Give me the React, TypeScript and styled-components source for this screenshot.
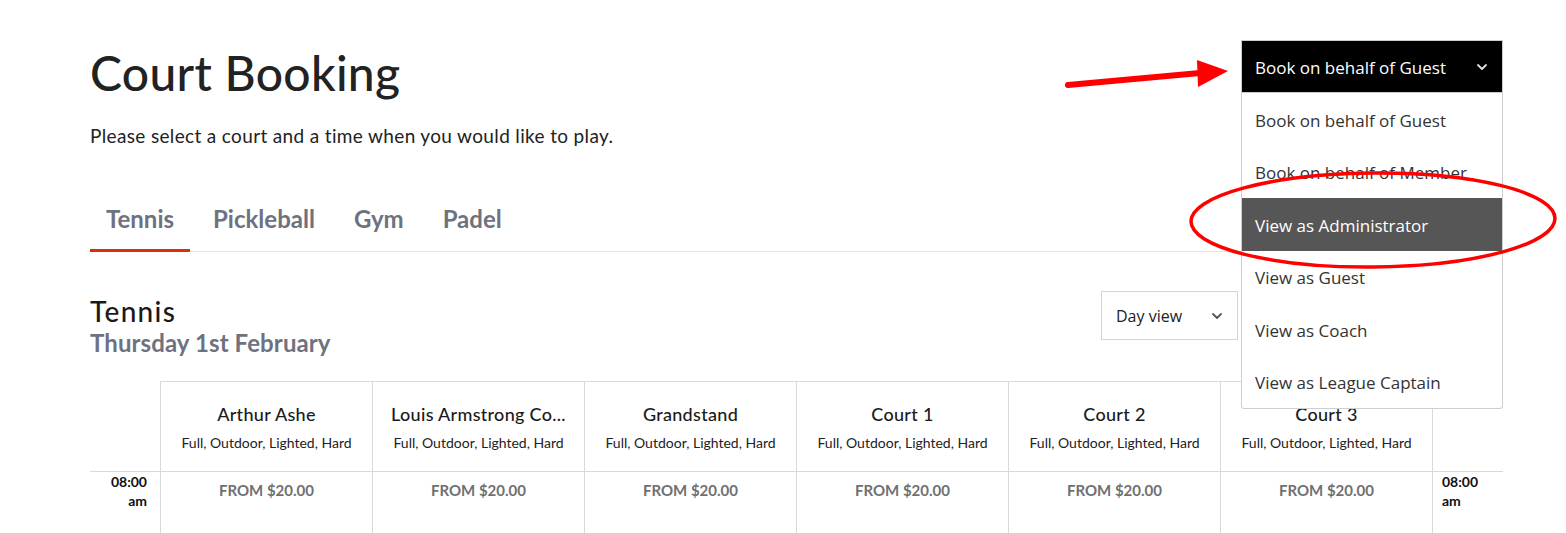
import React from "react";
import styled, { createGlobalStyle } from "styled-components";

const Global = createGlobalStyle`
  html, body { margin: 0; padding: 0; background: #fff; }
  body { font-family: Lato, "Open Sans", sans-serif; color: #222; }
  * { box-sizing: border-box; }
`;

const Page = styled.div`
  position: relative;
  width: 1566px;
  height: 533px;
  overflow: hidden;
  padding: 40px 63px 0 90px;
`;

const Header = styled.div`
  display: flex;
  justify-content: space-between;
  align-items: flex-start;
`;

const Title = styled.h1`
  margin: 6px 0 0 0;
  font-size: 48px;
  line-height: 54px;
  font-weight: 500;
  color: #222;
  letter-spacing: 0.3px;
`;

const Subtitle = styled.p`
  margin: 23px 0 0 0;
  font-size: 19px;
  line-height: 26px;
  color: #222;
  letter-spacing: 0.35px;
`;

const Tabs = styled.div`
  margin-top: 47px;
  display: flex;
  gap: 7px;
  border-bottom: 1px solid #e6e6e6;
`;

const Tab = styled.div<{ $active?: boolean }>`
  padding: 8px 16px 15px;
  font-size: 24px;
  line-height: 30px;
  font-weight: 700;
  color: #6e7280;
  border-bottom: 3px solid ${(p) => (p.$active ? "#e12b10" : "transparent")};
  margin-bottom: -1px;
`;

const SectionHead = styled.div`
  margin-top: 39px;
  display: flex;
  justify-content: space-between;
  align-items: flex-start;
`;

const SectionTitle = styled.div`
  font-size: 28px;
  line-height: 32px;
  font-weight: 500;
  color: #1a1a1a;
  letter-spacing: 1.3px;
  margin-top: 4px;
`;

const SectionDate = styled.div`
  font-size: 24px;
  line-height: 32px;
  font-weight: 700;
  color: #6e7280;
  letter-spacing: 0.1px;
`;

const Select = styled.div`
  display: flex;
  align-items: center;
  justify-content: space-between;
  width: 137px;
  height: 49px;
  margin-right: 265px;
  border: 1px solid #d4d4d4;
  padding: 0 14px 0 14px;
  font-family: "Open Sans", sans-serif;
  font-size: 16px;
  color: #222;
`;

const Table = styled.div`
  margin-top: 22px;
  display: grid;
  grid-template-columns: 70px repeat(6, 212px) 71px;
`;

const CornerCell = styled.div`
  border-bottom: 1px solid #d9d9d9;
`;

const CourtHead = styled.div`
  height: 91px;
  border-top: 1px solid #d9d9d9;
  border-left: 1px solid #d9d9d9;
  border-bottom: 1px solid #d9d9d9;
  display: flex;
  flex-direction: column;
  align-items: center;
  padding-top: 21px;
`;

const CourtName = styled.div`
  font-size: 18px;
  line-height: 23px;
  font-weight: 500;
  color: #1a1a1a;
  letter-spacing: 0.3px;
`;

const CourtMeta = styled.div`
  margin-top: 8px;
  font-size: 14px;
  line-height: 18px;
  color: #222;
`;

const TimeCell = styled.div<{ $right?: boolean }>`
  height: 62px;
  font-size: 14px;
  line-height: 19px;
  font-weight: 700;
  color: #111;
  padding-top: 0;
  text-align: ${(p) => (p.$right ? "left" : "right")};
  padding-left: ${(p) => (p.$right ? "9px" : "0")};
  padding-right: ${(p) => (p.$right ? "0" : "13px")};
  border-left: ${(p) => (p.$right ? "1px solid #d9d9d9" : "none")};
`;

const SlotCell = styled.div`
  height: 62px;
  border-left: 1px solid #d9d9d9;
  text-align: center;
  padding-top: 8px;
  font-size: 15px;
  line-height: 20px;
  font-weight: 700;
  color: #707070;
`;

const RoleWrap = styled.div`
  position: relative;
  width: 262px;
`;

const RoleButton = styled.div`
  height: 53px;
  background: #000;
  border: 1px solid #ccc;
  color: #fff;
  display: flex;
  align-items: center;
  justify-content: space-between;
  padding: 1px 14px 0 13px;
  font-family: "Open Sans", sans-serif;
  font-size: 17px;
`;

const Menu = styled.div`
  position: absolute;
  top: 53px;
  left: 0;
  width: 262px;
  background: #fff;
  border: 1px solid #cfcfcf;
  border-top: none;
  border-radius: 0 0 3px 3px;
  z-index: 5;
`;

const MenuItem = styled.div<{ $hl?: boolean }>`
  height: 52.5px;
  display: flex;
  align-items: center;
  padding: 2px 0 0 13px;
  font-family: "Open Sans", sans-serif;
  font-size: 17px;
  color: ${(p) => (p.$hl ? "#fff" : "#333")};
  background: ${(p) => (p.$hl ? "#565656" : "transparent")};
`;

const Overlay = styled.svg`
  position: absolute;
  top: 0;
  left: 0;
  pointer-events: none;
  z-index: 10;
`;

const Chevron = ({ color }: { color: string }) => (
  <svg width="12" height="8" viewBox="0 0 12 8" fill="none">
    <path d="M2 2l4 4 4-4" stroke={color} strokeWidth="1.8" strokeLinecap="round" strokeLinejoin="round" />
  </svg>
);

const courts = ["Arthur Ashe", "Louis Armstrong Co...", "Grandstand", "Court 1", "Court 2", "Court 3"];
const roles = [
  "Book on behalf of Guest",
  "Book on behalf of Member",
  "View as Administrator",
  "View as Guest",
  "View as Coach",
  "View as League Captain",
];

export default function App() {
  return (
    <>
      <Global />
      <Page>
        <Header>
          <div>
            <Title>Court Booking</Title>
            <Subtitle>Please select a court and a time when you would like to play.</Subtitle>
          </div>
          <RoleWrap>
            <RoleButton>
              <span>Book on behalf of Guest</span>
              <Chevron color="#ddd" />
            </RoleButton>
            <Menu>
              {roles.map((r) => (
                <MenuItem key={r} $hl={r === "View as Administrator"}>
                  {r}
                </MenuItem>
              ))}
            </Menu>
          </RoleWrap>
        </Header>
        <Tabs>
          <Tab $active>Tennis</Tab>
          <Tab>Pickleball</Tab>
          <Tab>Gym</Tab>
          <Tab>Padel</Tab>
        </Tabs>
        <SectionHead>
          <div>
            <SectionTitle>Tennis</SectionTitle>
            <SectionDate>Thursday 1st February</SectionDate>
          </div>
          <Select>
            <span>Day view</span>
            <Chevron color="#555" />
          </Select>
        </SectionHead>
        <Table>
          <CornerCell />
          {courts.map((c) => (
            <CourtHead key={c}>
              <CourtName>{c}</CourtName>
              <CourtMeta>Full, Outdoor, Lighted, Hard</CourtMeta>
            </CourtHead>
          ))}
          <CourtHead />
          <TimeCell>
            08:00
            <br />
            am
          </TimeCell>
          {courts.map((c) => (
            <SlotCell key={c}>FROM $20.00</SlotCell>
          ))}
          <TimeCell $right>
            08:00
            <br />
            am
          </TimeCell>
        </Table>
        <Overlay width="1566" height="533" viewBox="0 0 1566 533">
          <line x1="1068" y1="85" x2="1200" y2="73" stroke="#f00" strokeWidth="6" strokeLinecap="round" />
          <polygon points="1197,60 1228,71 1198,87" fill="#f00" />
          <ellipse cx="1373" cy="220" rx="182" ry="47" fill="none" stroke="#f00" strokeWidth="3.5" transform="rotate(-0.5 1373 220)" />
        </Overlay>
      </Page>
    </>
  );
}
